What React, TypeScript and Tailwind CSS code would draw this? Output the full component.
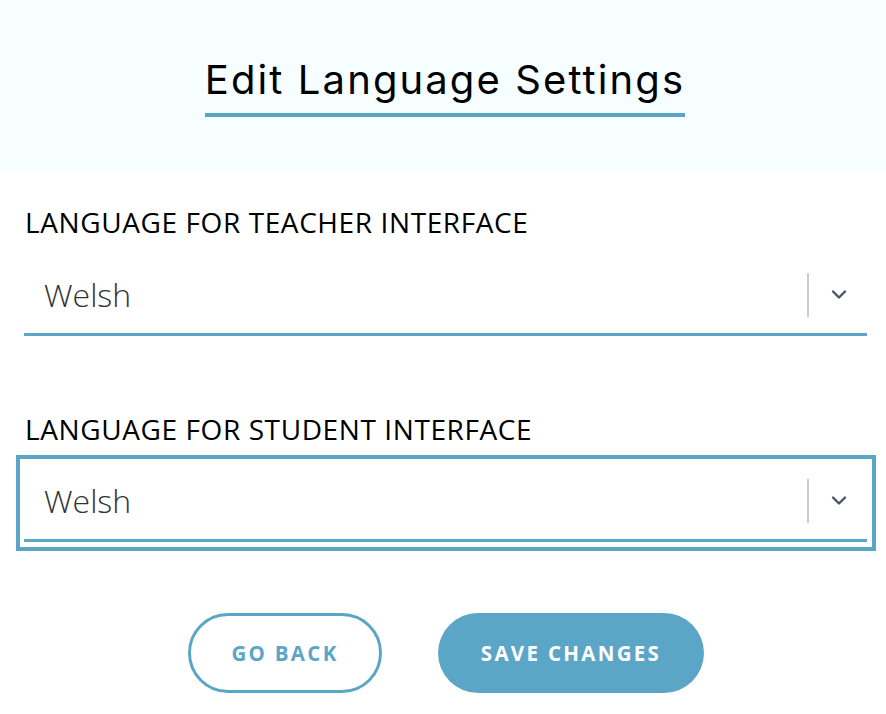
import React from "react";

function Chevron() {
  return (
    <svg width="18" height="11" viewBox="0 0 18 11" fill="none">
      <path d="M3 2.5l6 6 6-6" stroke="#4b5466" strokeWidth="2.4" strokeLinecap="round" strokeLinejoin="round" />
    </svg>
  );
}

function SelectInner() {
  return (
    <div className="flex h-[80px] items-center border-b-[3px] border-[#5ba6c7]">
      <div className="flex-1 pl-[20px] text-[32px] leading-[40px] font-light text-[#333] [font-family:'Open_Sans',sans-serif]">Welsh</div>
      <div className="h-[44px] w-[2px] bg-[#cccccc]" />
      <div className="flex w-[58px] items-center justify-center pl-[2px]">
        <Chevron />
      </div>
    </div>
  );
}

export default function App() {
  return (
    <div className="min-h-[714px] w-[886px] bg-white [font-family:'Open_Sans',sans-serif]">
      <div className="flex h-[172px] justify-center bg-[#f7feff] pt-[56px] pl-[4px]">
        <div className="flex flex-col items-center">
          <h1 className="text-[40px] leading-[48px] tracking-[2.1px] text-black [font-family:Inter,sans-serif]">Edit Language Settings</h1>
          <div className="mt-[9px] h-[4px] w-full bg-[#5ba6c7]" />
        </div>
      </div>
      <div className="pt-[34px]">
        <div className="pl-[25px] text-[28px] leading-[32px] tracking-[0.6px] text-black">LANGUAGE FOR TEACHER INTERFACE</div>
        <div className="mt-[18px] ml-[24px] mr-[19px]">
          <SelectInner />
        </div>
        <div className="mt-[77px] pl-[25px] text-[28px] leading-[32px] tracking-[0.6px] text-black">LANGUAGE FOR STUDENT INTERFACE</div>
        <div className="mt-[10px] ml-[16px] mr-[10px] border-[4px] border-[#5ba6c7] pl-[4px] pr-[5px] pt-[3px] pb-[5px]">
          <SelectInner />
        </div>
        <div className="mt-[62px] flex justify-center gap-[56px] pl-[6px]">
          <button className="h-[80px] w-[194px] rounded-full border-[3px] border-[#5ba6c7] bg-white text-[20.5px] font-bold tracking-[2.3px] text-[#5ba6c7]">
            GO BACK
          </button>
          <button className="h-[80px] w-[266px] rounded-full bg-[#5ba6c7] text-[20.5px] font-bold tracking-[2.3px] text-white">
            SAVE CHANGES
          </button>
        </div>
      </div>
    </div>
  );
}
